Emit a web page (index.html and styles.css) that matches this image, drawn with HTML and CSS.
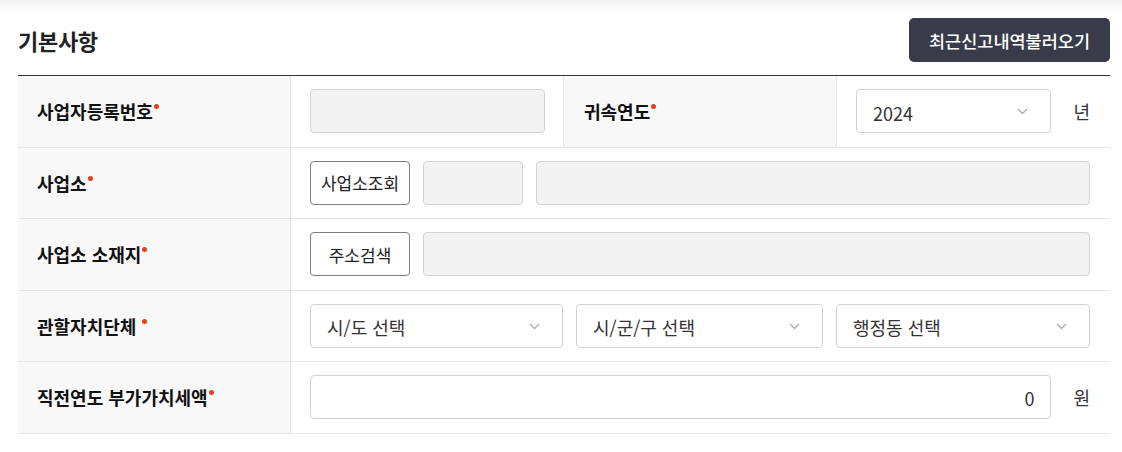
FILE: index.html
```html
<!DOCTYPE html>
<html lang="ko">

<head>
    <meta charset="UTF-8">
    <title>기본사항</title>
    <link rel="stylesheet" href="styles.css">
</head>

<body>
    <div class="top-shade"></div>
    <div class="section">
        <div class="section-head">
            <h2>기본사항</h2>
            <button type="button" class="btn-dark">최근신고내역불러오기</button>
        </div>

        <div class="form-table">
            <!-- 사업자등록번호 / 귀속연도 -->
            <div class="th"><span>사업자등록번호<i class="req"></i></span></div>
            <div class="td sep">
                <input type="text" class="inp" disabled>
            </div>
            <div class="th"><span>귀속연도<i class="req"></i></span></div>
            <div class="td">
                <div class="sel-wrap grow">
                    <select class="sel">
                        <option>2024</option>
                    </select>
                    <svg class="chev" width="11" height="7" viewBox="0 0 11 7"><path d="M1 1l4.5 4.5L10 1" fill="none" stroke="#b0b0b0" stroke-width="1.4"/></svg>
                </div>
                <span class="unit">년</span>
            </div>

            <!-- 사업소 -->
            <div class="th"><span>사업소<i class="req"></i></span></div>
            <div class="td wide">
                <button type="button" class="btn-line">사업소조회</button>
                <input type="text" class="inp short" disabled>
                <input type="text" class="inp grow" disabled>
            </div>

            <!-- 사업소 소재지 -->
            <div class="th"><span>사업소 소재지<i class="req"></i></span></div>
            <div class="td wide">
                <button type="button" class="btn-line">주소검색</button>
                <input type="text" class="inp grow" disabled>
            </div>

            <!-- 관할자치단체 -->
            <div class="th"><span>관할자치단체 <i class="req"></i></span></div>
            <div class="td wide three">
                <div class="sel-wrap">
                    <select class="sel"><option>시/도 선택</option></select>
                    <svg class="chev" width="11" height="7" viewBox="0 0 11 7"><path d="M1 1l4.5 4.5L10 1" fill="none" stroke="#b0b0b0" stroke-width="1.4"/></svg>
                </div>
                <div class="sel-wrap">
                    <select class="sel"><option>시/군/구 선택</option></select>
                    <svg class="chev" width="11" height="7" viewBox="0 0 11 7"><path d="M1 1l4.5 4.5L10 1" fill="none" stroke="#b0b0b0" stroke-width="1.4"/></svg>
                </div>
                <div class="sel-wrap">
                    <select class="sel"><option>행정동 선택</option></select>
                    <svg class="chev" width="11" height="7" viewBox="0 0 11 7"><path d="M1 1l4.5 4.5L10 1" fill="none" stroke="#b0b0b0" stroke-width="1.4"/></svg>
                </div>
            </div>

            <!-- 직전연도 부가가치세액 -->
            <div class="th"><span>직전연도 부가가치세액<i class="req"></i></span></div>
            <div class="td wide">
                <input type="text" class="inp num grow" value="0">
                <span class="unit">원</span>
            </div>
        </div>
    </div>
</body>

</html>
```

FILE: styles.css
```css
body {
    font-family: "Noto Sans CJK KR", "Noto Sans", sans-serif;
    background-color: #fff;
    color: #222;
    margin: 0;
    padding: 0;
}

.top-shade {
    height: 10px;
    background: linear-gradient(#f1f1f1, #fff);
}

.section {
    padding: 8px 12px 0 18px;
}

.section-head {
    display: flex;
    align-items: center;
    justify-content: space-between;
    height: 44px;
    margin-bottom: 13px;
}

h2 {
    margin: 0;
    font-size: 22px;
    font-weight: 700;
    color: #222;
    letter-spacing: -0.3px;
}

.btn-dark {
    height: 44px;
    padding: 0 20px;
    background-color: #393b4a;
    color: #fff;
    border: none;
    border-radius: 5px;
    font-family: inherit;
    font-size: 17.5px;
    font-weight: 500;
    cursor: pointer;
}

.form-table {
    display: grid;
    grid-template-columns: 273px 273px 273px 1fr;
    grid-auto-rows: 71.5px;
    border-top: 1px solid #333;
}

.th {
    display: flex;
    align-items: center;
    padding: 0 19px 0 19px;
    background-color: #f8f8f8;
    border-right: 1px solid #e5e5e5;
    border-bottom: 1px solid #e5e5e5;
    font-size: 18px;
    font-weight: 700;
    color: #111;
    line-height: 22px;
}

.th:nth-child(3) {
    padding-left: 20px;
}

.req {
    display: inline-block;
    width: 5px;
    height: 5px;
    margin: 4px 0 0 1px;
    vertical-align: top;
    border-radius: 50%;
    background-color: #e8400f;
}

.td {
    display: flex;
    align-items: center;
    gap: 13px;
    padding: 0 20px 0 19px;
    border-bottom: 1px solid #e5e5e5;
}

.td.sep {
    border-right: 1px solid #e5e5e5;
    padding-right: 18px;
}

.td.wide {
    grid-column: span 3;
}

.td.three {
    display: grid;
    grid-template-columns: 253px 247px 1fr;
}

.grow {
    flex: 1;
}

.inp {
    box-sizing: border-box;
    width: 100%;
    height: 44px;
    padding: 2px 16px 0;
    border: 1px solid #d3d3d3;
    border-radius: 4px;
    background-color: #f3f3f3;
    font-family: inherit;
    font-size: 18px;
    color: #333;
}

.inp.short {
    width: 100px;
    flex: none;
}

.inp.num {
    background-color: #fff;
    text-align: right;
}

.btn-line {
    flex: none;
    box-sizing: border-box;
    width: 100px;
    height: 44px;
    padding: 0;
    background-color: #fff;
    border: 1px solid #7d7d7d;
    border-radius: 4px;
    font-family: inherit;
    font-size: 17px;
    color: #222;
    cursor: pointer;
}

.sel-wrap {
    position: relative;
    height: 44px;
}

.sel {
    box-sizing: border-box;
    width: 100%;
    height: 44px;
    padding: 3px 40px 0 16px;
    border: 1px solid #d3d3d3;
    border-radius: 4px;
    background-color: #fff;
    -webkit-appearance: none;
    appearance: none;
    font-family: inherit;
    font-size: 18px;
    color: #333;
}

.chev {
    position: absolute;
    right: 23px;
    top: 19px;
    pointer-events: none;
}

.unit {
    flex: none;
    margin-left: 9px;
    font-size: 18px;
    color: #333;
}
```
